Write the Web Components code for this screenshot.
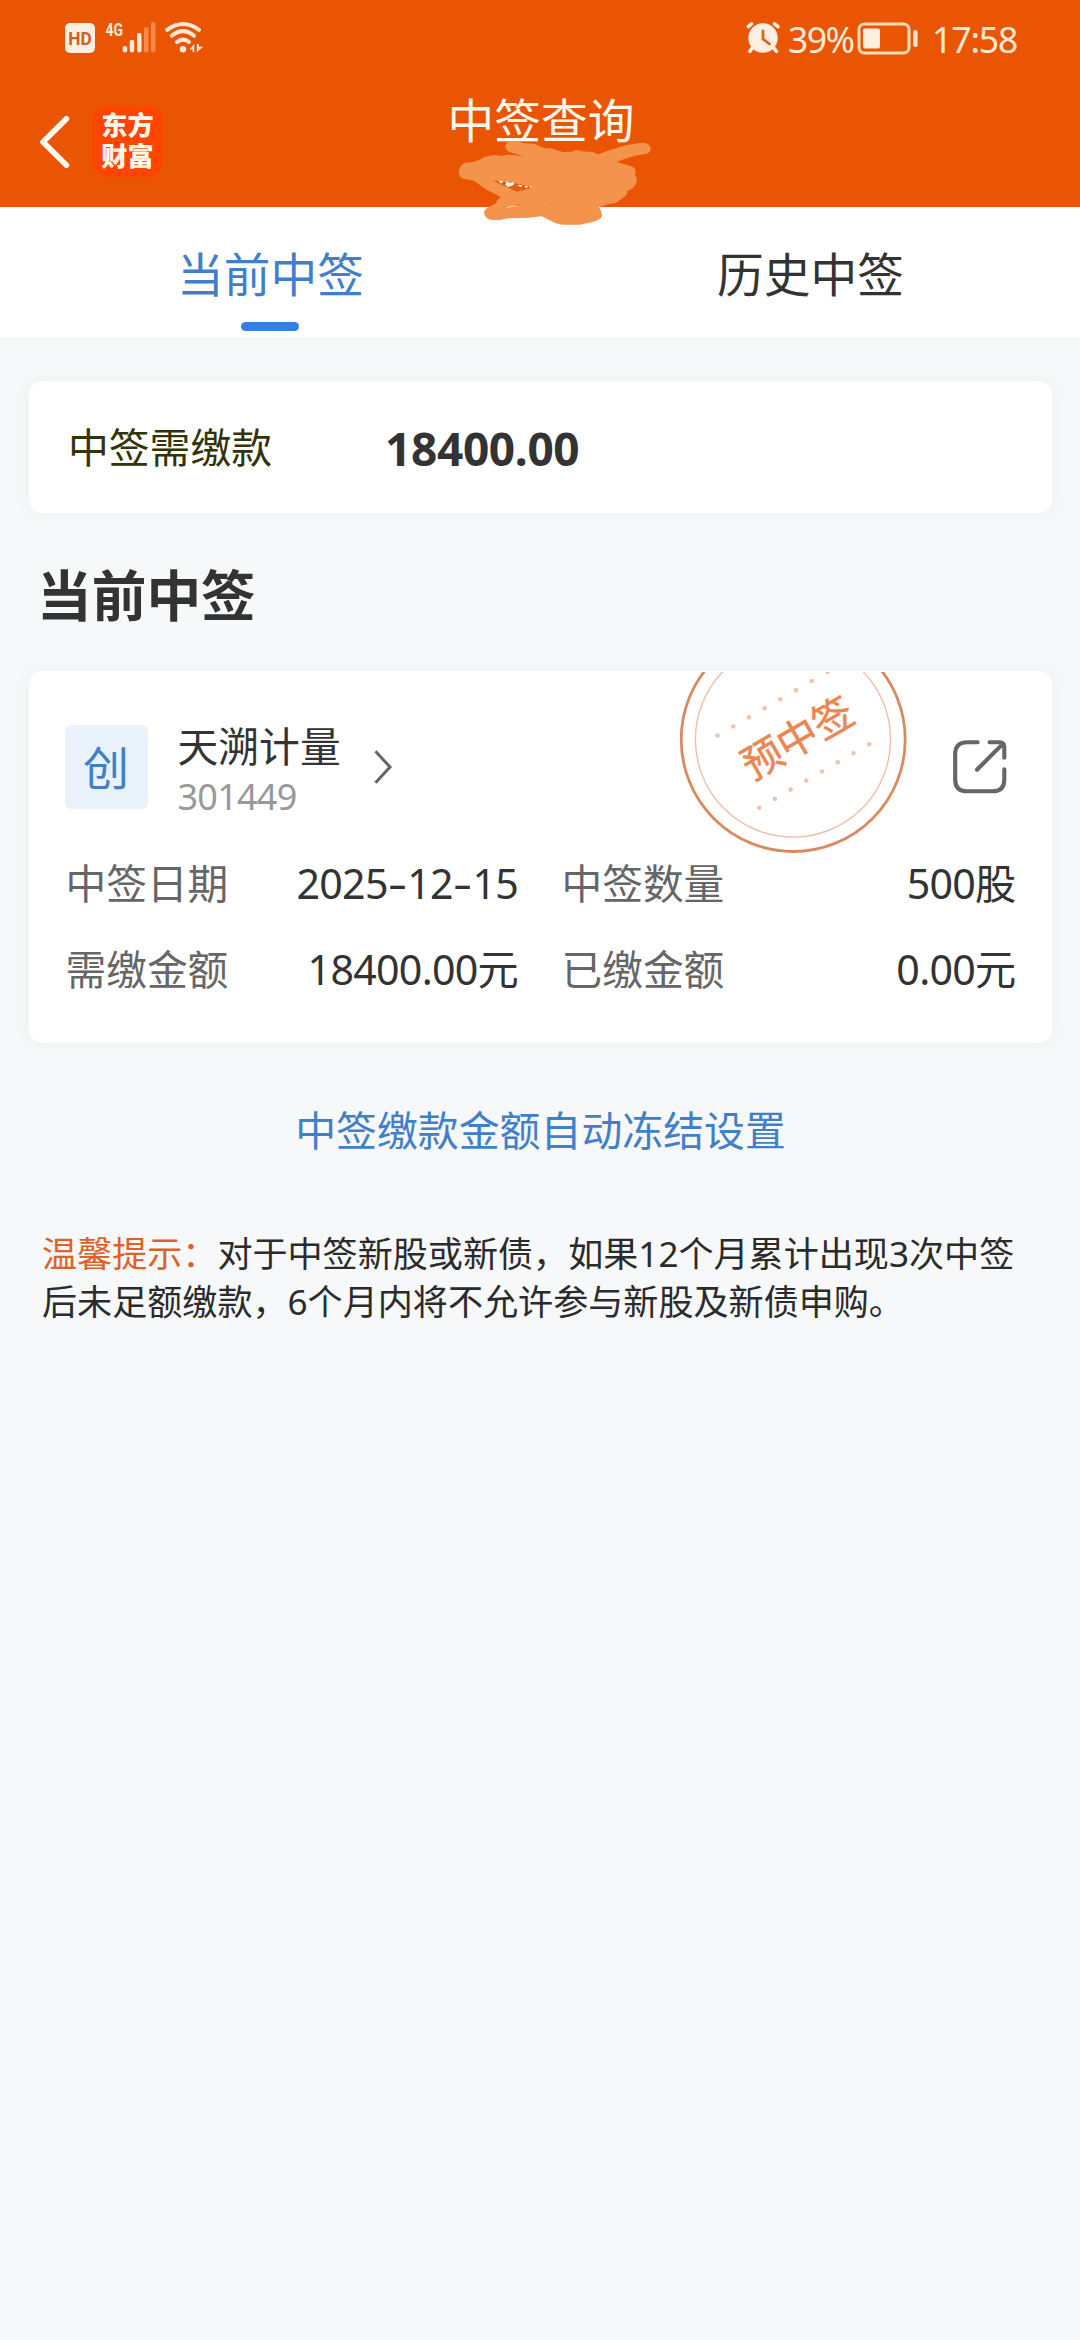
<!DOCTYPE html>
<html lang="zh-CN">
<head>
<meta charset="utf-8">
<title>中签查询</title>
<style>
html,body{margin:0;padding:0}
body{width:1080px;height:2340px;overflow:hidden;background:#f7f8fa;color:#333;font-family:"Noto Sans","Noto Sans CJK SC",sans-serif}
</style>
</head>
<body>
<lottery-page></lottery-page>
<script>
const define=(name,html)=>{
  const t=document.createElement('template');
  t.innerHTML=html;
  customElements.define(name,class extends HTMLElement{
    constructor(){super();this.attachShadow({mode:'open'}).append(t.content.cloneNode(true));}
  });
};

define('status-bar',`<style>
:host{display:flex;justify-content:space-between;align-items:center;height:76px;padding:0 66px 0 65px;color:#ffe9d6;box-sizing:border-box}
div{display:flex;align-items:center}
svg{display:block}
.pct{font-size:35.5px;line-height:40px;letter-spacing:-1.5px;margin-left:8px;width:69px;padding-top:1px}
.time{font-size:35.5px;line-height:40px;letter-spacing:-1.1px;width:82px;margin-left:13px;white-space:nowrap;padding-top:1px}
text{font-family:Roboto,sans-serif}
</style>
<div><svg width="142" height="36" viewBox="65 20 142 36" fill="#ffe9d6">
<rect x="65" y="23" width="30" height="30" rx="5" fill="#ffeee2"/>
<text x="68.3" y="45.2" font-size="19" font-weight="700" fill="#c9602a" textLength="23.5" lengthAdjust="spacingAndGlyphs">HD</text>
<text x="105.6" y="35.6" font-size="18.5" font-weight="700" textLength="17.5" lengthAdjust="spacingAndGlyphs">4G</text>
<rect x="122.7" y="46" width="4.5" height="6.5" rx="2"/><rect x="129.7" y="39.7" width="4.5" height="12.8" rx="2"/><rect x="137" y="33" width="4.5" height="19.5" rx="2"/>
<g fill="#fb8748"><rect x="144" y="27" width="4.5" height="25.5" rx="2"/><rect x="151" y="22" width="4.5" height="30.5" rx="2"/></g>
<g fill="none" stroke="#ffe9d6" stroke-width="4" stroke-linecap="round"><path d="M167.3 29.8Q183 18.2 199 29.8"/><path d="M171.8 35.7Q183 26.5 194 35.7"/><path d="M177 42Q183 37.2 189 42"/></g>
<circle cx="183" cy="49.3" r="3.2"/>
<path d="M189.7 49.5L194.2 43.8V52.3H192.7V49.5ZM196.8 44V52.3L203.2 46.7H199V44Z"/>
</svg></div>
<div><svg width="34" height="34" viewBox="746 21 34 34" fill="#ffeee2">
<circle cx="763" cy="38" r="14.7"/><path d="M752.3 48L749.8 51.3M773.7 48L776.5 51.3M748.4 26.6L751.4 23.8M774.6 23.8L778 26.6" fill="none" stroke="#ffeee2" stroke-width="3.6" stroke-linecap="round"/>
<path d="M763 31V39L769.5 44" fill="none" stroke="#d9651d" stroke-width="2.8" stroke-linecap="round"/></svg>
<span class="pct">39%</span>
<svg width="62" height="34" viewBox="858 20 62 34" fill="none"><rect x="860" y="23" width="50" height="29" rx="5.5" stroke="#ffdbb8" stroke-width="3"/><rect x="864" y="27.5" width="17" height="20" rx="2" fill="#ffeee2"/><rect x="914.2" y="29" width="4.4" height="17" rx="2" fill="#ffe3c8"/></svg>
<span class="time">17:58</span></div>`);

define('app-logo',`<style>
:host{display:flex;flex-direction:column;align-items:center;justify-content:center;width:71px;height:71px;border-radius:15px;background:#ff4500;color:#fff7e8;font:900 26.2px/30.6px "Liberation Sans","Noto Sans CJK SC",sans-serif;box-sizing:border-box;padding-top:1px}
</style><span>东方</span><span>财富</span>`);

define('nav-bar',`<style>
:host{display:grid;grid-template-columns:1fr auto 1fr;height:130.5px;padding:0 40px;box-sizing:border-box}
svg{display:block}
.left{display:flex;align-items:flex-start;gap:20.5px;padding-top:29.5px}
.back{margin-top:8px}
h1{margin:20px 0 0 2px;font-weight:400;font-size:46.7px;line-height:48px;color:#fff8ec}
.wrap{position:relative}
.mark{position:absolute;left:8.5px;top:63px;z-index:2}
</style>
<div class="left"><svg class="back" width="31.5" height="56" viewBox="40 114 31.5 56" fill="none" stroke="#fffaf2" stroke-width="5.6" stroke-linecap="round" stroke-linejoin="round"><path d="M66.5 118.8L43 142L66.5 165.2"/></svg><app-logo></app-logo></div>
<div class="wrap"><h1><slot></slot></h1>
<svg class="mark" width="260" height="100" viewBox="0 180 780 300"><path fill="#f4934b" d="M298 281Q299 261 316 252L344 248L365 241Q373 232 392 230Q407 226 426 231L443 227L493 231L456 221Q439 216 438 202Q440 187 458 186Q478 187 492 192L528 195Q543 204 558 208Q579 207 588 212L610 219L638 218Q652 209 666 217L700 219L717 226L750 214L800 199L846 191Q870 190 874 207Q875 221 859 225Q830 228 801 238L772 249L810 260Q826 262 829 277L827 289Q834 298 832 307Q831 318 820 328L804 336Q805 346 797 352Q786 360 770 372L745 376L719 385Q729 398 728 411Q724 423 696 430L662 437L608 437Q586 434 571 424L548 412L500 417L447 418L422 423L393 422Q376 417 374 401Q374 391 393 382L409 373Q415 360 424 354L378 330L345 306L325 301Q301 301 298 281Z" transform="translate(-284 0)"/>
<path fill="#e65c0d" d="M116 305L132 305L233 322L228 328L190 338L163 326Z"/><path fill="#fff" d="M133 305L147 306L142 314ZM158 307L169 313L180 309L179 318L161 324L154 317ZM190 318L205 318L201 325ZM211 320L222 321L217 328ZM225 321L234 322L228 326Z"/><path d="M158 387Q168 380 193 381" fill="none" stroke="#fff1df" stroke-width="2"/><path d="M180 379L192 375L201 380ZM283 374L300 372L293 376Z" fill="#e27a35"/></svg></div>`);

define('tab-item',`<style>
:host{display:flex;flex-direction:column;align-items:center;flex:1;font-size:46.7px;line-height:54px;padding-top:40px;color:#333;gap:21px}
:host([active]){color:#427fca}
i{width:58px;height:9px;border-radius:5px}
:host([active]) i{background:#367fdf}
span{margin-left:1px}
</style><span><slot></slot></span><i></i>`);
define('tab-bar',`<style>:host{display:flex;height:130.5px;background:#fff}</style><slot></slot>`);

define('ui-card',`<style>:host{display:block;background:#fff;border-radius:14px;margin:0 28.5px;box-shadow:0 0 16px rgba(60,70,90,.055);position:relative;box-sizing:border-box}</style><slot></slot>`);

define('pay-summary',`<style>
:host{display:flex;align-items:center;height:132px;padding-left:39.5px}
span{font-size:40.8px;line-height:48px;color:#333307;width:317px}
b{font-size:46px;line-height:50px;letter-spacing:-.35px;font-weight:700;padding-top:1px}
</style><span><slot name="label"></slot></span><b><slot></slot></b>`);

define('board-badge',`<style>:host{display:flex;align-items:center;justify-content:center;width:83px;height:84px;border-radius:6px;background:#e9f2fb;color:#427fca;font-size:46px;line-height:50px}</style><slot></slot>`);

define('status-stamp',`<style>
:host{display:block;position:absolute;left:647.5px;top:1.5px;width:234px;height:184px;overflow:hidden}
svg{display:block}text{font-family:"Noto Sans CJK SC",sans-serif;font-size:40.5px}
.d{fill:none;stroke:#efc3ae;stroke-width:4.6;stroke-linecap:round;stroke-dasharray:0 18.15}
</style><svg width="234" height="184" viewBox="675.5 672.5 234 184">
<circle cx="792.7" cy="740" r="112" fill="none" stroke="#da8a61" stroke-width="2.8"/>
<circle cx="792.5" cy="740" r="97.6" fill="none" stroke="#ecc0ae" stroke-width="1.4"/>
<path class="d" d="M717 736.1L827.2 672.3"/><path class="d" d="M758.7 808.3L869 744.5"/>
<text transform="translate(796.7 738) rotate(-30)" x="0" y="15.4" text-anchor="middle" fill="#eb8653" stroke="#eb8653" stroke-width=".5">预中签</text></svg>`);

define('stock-head',`<style>
:host{display:flex;height:84px;align-items:center}
.n{margin-left:30px;width:196px;display:flex;flex-direction:column;gap:1px;padding-top:8px}
.n span{font-size:40.8px;line-height:50px}
.n small{font-size:36px;line-height:50px;color:#999;letter-spacing:-.75px}
svg{display:block}
.share{margin-left:auto}
</style><board-badge>创</board-badge>
<div class="n"><span><slot name="name"></slot></span><small><slot name="code"></slot></small></div>
<svg width="20" height="34" viewBox="0 0 20 34" fill="none" stroke="#666" stroke-width="3"><path d="M1.5 1.2L16 17L1.5 32.8"/></svg>
<svg class="share" width="54" height="54" viewBox="0 0 54 54" fill="none" stroke="#666" stroke-width="4.1" stroke-linecap="round"><path d="M24.7 2.2H14Q2.2 2.2 2.2 14V39.5Q2.2 51.3 14 51.3H39.5Q51.3 51.3 51.3 39.5V29.3M36.5 2.2H46.5Q51.3 2.2 51.3 7V17.7M24 29.7L49.3 4.4"/></svg>`);

define('lot-field',`<style>
:host{display:flex;justify-content:space-between;font-size:40.7px;line-height:50px}
span{color:#666}
b{font-weight:400;color:#333;white-space:nowrap;font-size:41.2px;letter-spacing:-.75px}
</style><span><slot name="label"></slot></span><b><slot></slot></b>`);

define('lot-card',`<style>
:host{display:block;height:372.5px;padding:54.5px 36px 0;box-sizing:border-box}
stock-head{padding-right:9px}
.g{display:grid;grid-template-columns:452.5px 454px;column-gap:43.5px;row-gap:36px;margin:48.5px 0 0 1px}
.h{display:inline-block;width:19.5px;text-align:center;letter-spacing:0;transform:scaleX(1.45)}
</style><status-stamp></status-stamp>
<stock-head><span slot="name">天溯计量</span><span slot="code">301449</span></stock-head>
<div class="g">
<lot-field><span slot="label">中签日期</span>2025<span class="h">-</span>12<span class="h">-</span>15</lot-field><lot-field><span slot="label">中签数量</span>500股</lot-field>
<lot-field><span slot="label">需缴金额</span>18400.00元</lot-field><lot-field><span slot="label">已缴金额</span>0.00元</lot-field></div>`);

define('warm-tip',`<style>
:host{display:block;padding:0 42px;font-size:35.1px;line-height:48px;color:#2b2b2b;white-space:nowrap}
em{font-style:normal;color:#df6127}
</style><em>温馨提示：</em><slot></slot>`);

define('lottery-page',`<style>
:host{display:flex;flex-direction:column;width:1080px;height:2340px;background:#f7f8fa}
header{background:#ea5504;height:206.5px}
h2{margin:48.5px 0 43px 37px;font-weight:700;font-size:54.7px;line-height:66px;color:#333}
.sum{margin-top:44px}
a{display:block;text-align:center;color:#427fca;font-size:40.9px;line-height:50px;margin:61.5px 0 74px 1px}
</style>
<header><status-bar></status-bar><nav-bar>中签查询</nav-bar></header>
<tab-bar><tab-item active>当前中签</tab-item><tab-item>历史中签</tab-item></tab-bar>
<ui-card class="sum"><pay-summary><span slot="label">中签需缴款</span>18400.00</pay-summary></ui-card>
<h2>当前中签</h2>
<ui-card><lot-card></lot-card></ui-card>
<a>中签缴款金额自动冻结设置</a>
<warm-tip>对于中签新股或新债，如果12个月累计出现3次中签<br>后未足额缴款，6个月内将不允许参与新股及新债申购。</warm-tip>`);
</script>
</body>
</html>
